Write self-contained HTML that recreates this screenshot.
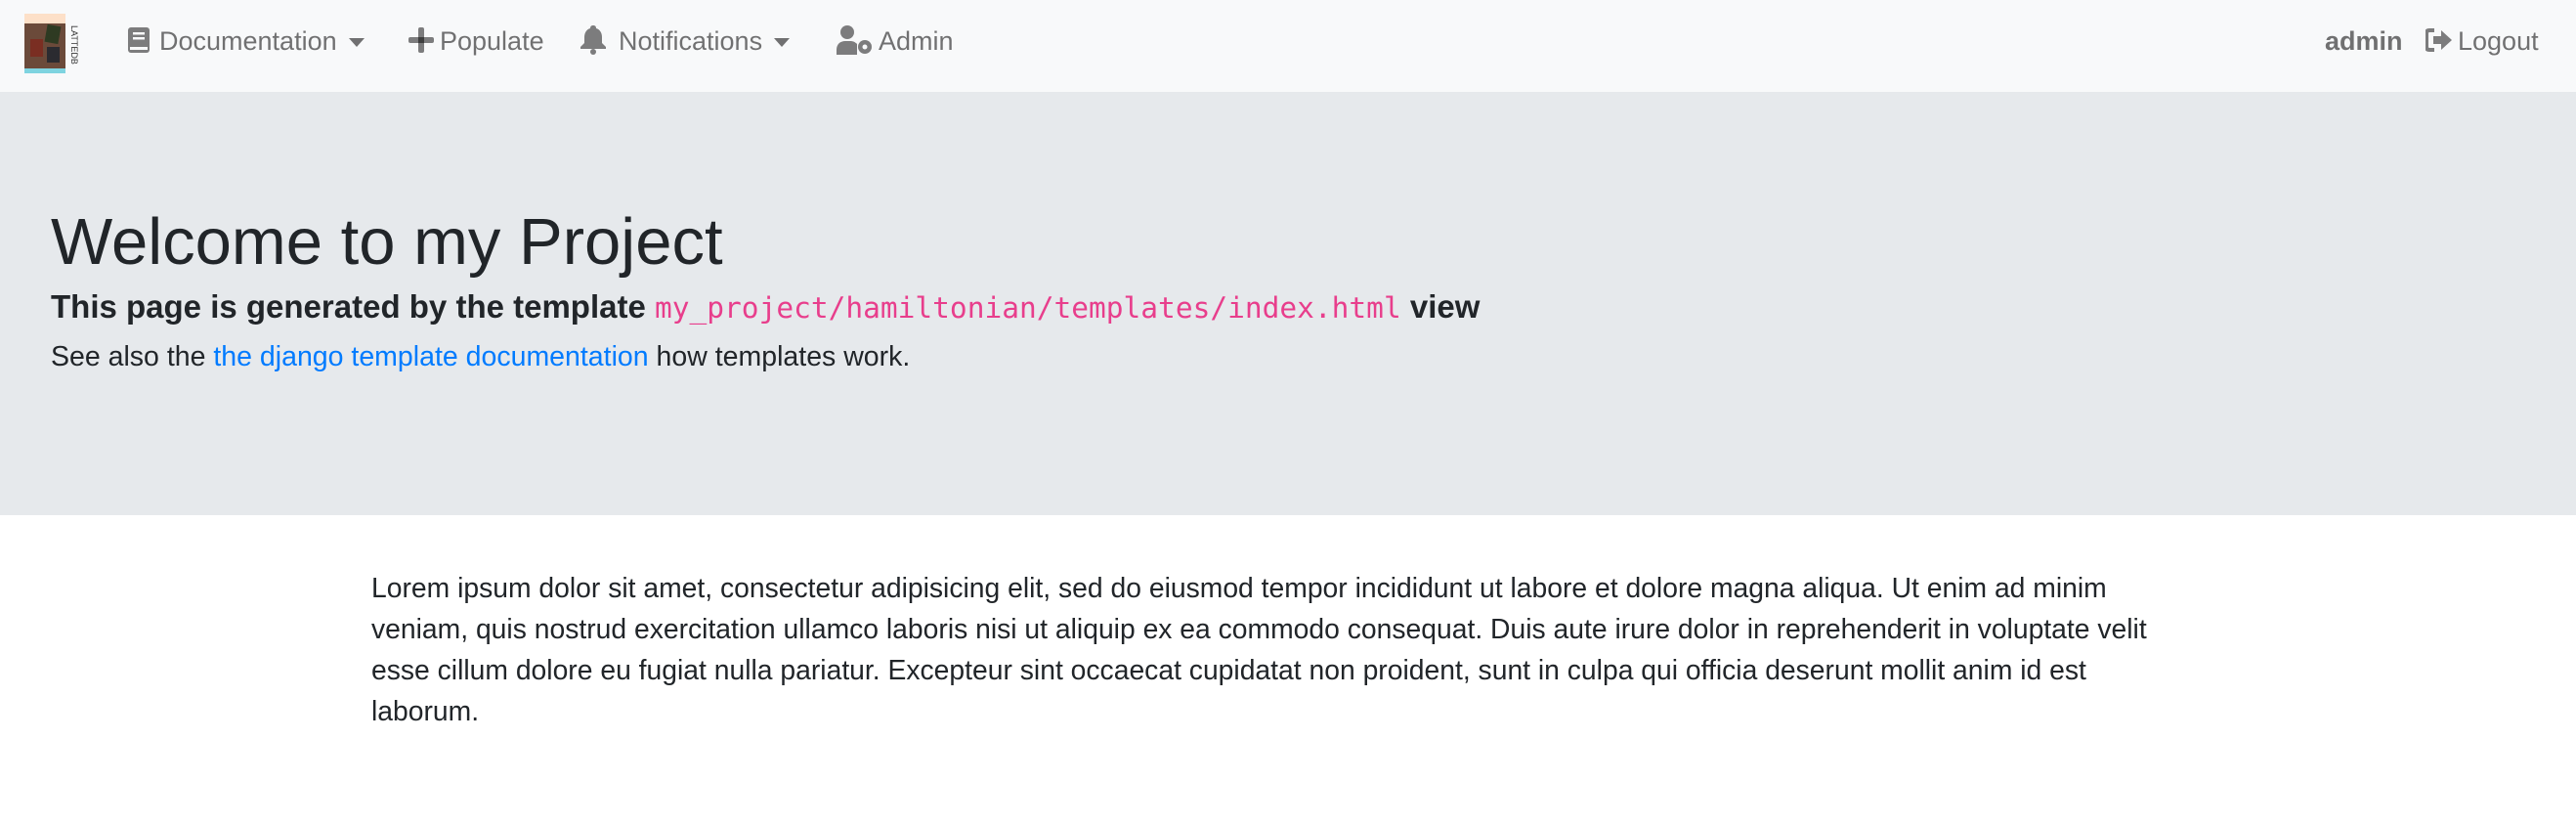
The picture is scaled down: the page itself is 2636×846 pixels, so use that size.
<!DOCTYPE html>
<html><head><meta charset="utf-8"><style>
*{margin:0;padding:0;box-sizing:border-box}
body{width:2636px;height:846px;background:#fff;font-family:"Liberation Sans",sans-serif;color:#212529;overflow:hidden;position:relative}
.nav{position:absolute;left:0;top:0;width:2636px;height:94px;background:#f8f9fa}
.n{position:absolute;top:24px;font-size:27px;color:rgba(0,0,0,.55);line-height:36px;white-space:nowrap}
.jumbo{position:absolute;left:0;top:94px;width:2636px;height:433px;background:#e6e9ec}
.t{position:absolute;white-space:nowrap}
code{font-family:"DejaVu Sans Mono","Liberation Mono",monospace;color:#e83e8c;font-size:29.5px;font-weight:normal}
a{color:#007bff;text-decoration:none}
.caret{display:inline-block;width:0;height:0;border-left:8px solid transparent;border-right:8px solid transparent;border-top:9px solid rgba(0,0,0,.55);vertical-align:middle;margin-left:12px}
</style></head><body>
<div class="nav">
  <svg style="position:absolute;left:25px;top:14px" width="56" height="62" viewBox="0 0 56 62">
    <rect x="0" y="0" width="42" height="10" fill="#fde0c8"/>
    <rect x="0" y="10" width="42" height="46" fill="#6b4a3a"/>
    <rect x="0" y="56" width="42" height="5" fill="#7fd4e0"/>
    <rect x="22" y="12" width="14" height="18" fill="#2e3a22" transform="rotate(10 29 21)"/>
    <rect x="6" y="26" width="13" height="18" fill="#7a2e22"/>
    <rect x="23" y="34" width="13" height="16" fill="#2b2b30"/>
    <text x="48" y="12" font-size="9" fill="#333" transform="rotate(90 48 12)" font-family="Liberation Sans">LATTEDB</text>
  </svg>
  <svg style="position:absolute;left:131px;top:28px" width="22" height="26" viewBox="0 0 22 26"><rect x="0" y="0" width="22" height="26" rx="3" fill="rgba(0,0,0,.5)"/><rect x="5" y="5" width="12" height="2.5" fill="#f8f9fa"/><rect x="5" y="10" width="12" height="2.5" fill="#f8f9fa"/><rect x="2" y="20" width="18" height="3" fill="#f8f9fa"/></svg>
  <div class="n" style="left:163px">Documentation<span class="caret"></span></div>
  <svg style="position:absolute;left:418px;top:28px" width="26" height="26" viewBox="0 0 26 26"><rect x="10" y="0" width="6" height="26" rx="2" fill="rgba(0,0,0,.5)"/><rect x="0" y="10" width="26" height="6" rx="2" fill="rgba(0,0,0,.5)"/></svg>
  <div class="n" style="left:450px">Populate</div>
  <svg style="position:absolute;left:594px;top:26px" width="26" height="30" viewBox="0 0 26 30"><path d="M13 0c2 0 3 1 3 3c4 1 6 5 6 9v6l4 4v2H0v-2l4-4v-6c0-4 2-8 6-9c0-2 1-3 3-3z" fill="rgba(0,0,0,.5)"/><circle cx="13" cy="27" r="3" fill="rgba(0,0,0,.5)"/></svg>
  <div class="n" style="left:633px">Notifications<span class="caret"></span></div>
  <svg style="position:absolute;left:856px;top:26px" width="38" height="30" viewBox="0 0 38 30"><circle cx="11" cy="7" r="7" fill="rgba(0,0,0,.5)"/><path d="M0 30v-5c0-6 4-9 9-9h5c3 0 5 1 7 3v11z" fill="rgba(0,0,0,.5)"/><circle cx="29" cy="22" r="7" fill="rgba(0,0,0,.5)"/><circle cx="29" cy="22" r="2.5" fill="#f8f9fa"/></svg>
  <div class="n" style="left:899px">Admin</div>
  <div class="n" style="left:2379px;font-weight:bold">admin</div>
  <svg style="position:absolute;left:2482px;top:29px" width="28" height="24" viewBox="0 0 28 24"><path d="M9 2H4C2 2 1 3 1 5v14c0 2 1 3 3 3h5" stroke="rgba(0,0,0,.5)" stroke-width="4" fill="none"/><path d="M8 8h8V2l11 10l-11 10v-6H8z" fill="rgba(0,0,0,.5)"/></svg>
  <div class="n" style="left:2515px">Logout</div>
</div>
<div class="jumbo">
  <div class="t" style="left:52px;top:114px;font-size:67px;line-height:80px">Welcome to my Project</div>
  <div class="t" style="left:52px;top:200px;font-size:33px;line-height:40px;font-weight:bold">This page is generated by the template <code>my_project/hamiltonian/templates/index.html</code> view</div>
  <div class="t" style="left:52px;top:254px;font-size:28.5px;line-height:34px">See also the <a>the django template documentation</a> how templates work.</div>
</div>
<div class="t" style="left:380px;top:580px;width:1830px;white-space:normal;font-size:28.3px;line-height:42px">Lorem ipsum dolor sit amet, consectetur adipisicing elit, sed do eiusmod tempor incididunt ut labore et dolore magna aliqua. Ut enim ad minim veniam, quis nostrud exercitation ullamco laboris nisi ut aliquip ex ea commodo consequat. Duis aute irure dolor in reprehenderit in voluptate velit esse cillum dolore eu fugiat nulla pariatur. Excepteur sint occaecat cupidatat non proident, sunt in culpa qui officia deserunt mollit anim id est laborum.</div>
</body></html>
